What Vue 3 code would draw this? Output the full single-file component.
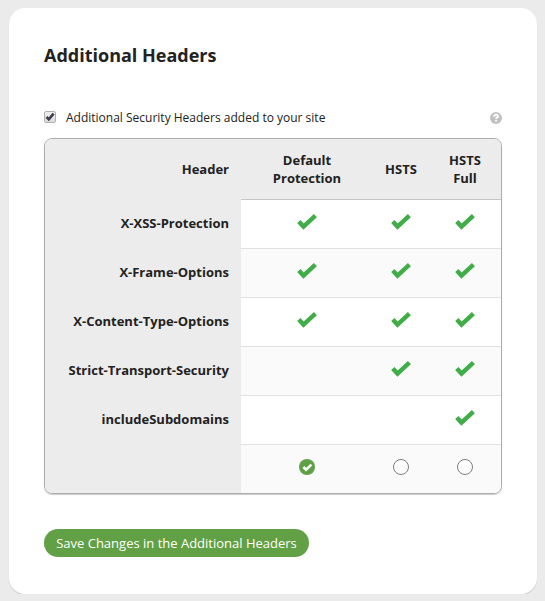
<script setup>
import { ref } from 'vue'

const enabled = ref(true)
const selected = ref(0)
const plans = ['Default Protection', 'HSTS', 'HSTS Full']
const rows = [
  { name: 'X-XSS-Protection', on: [true, true, true] },
  { name: 'X-Frame-Options', on: [true, true, true] },
  { name: 'X-Content-Type-Options', on: [true, true, true] },
  { name: 'Strict-Transport-Security', on: [false, true, true] },
  { name: 'includeSubdomains', on: [false, false, true] },
]
</script>

<template>
  <main class="card">
    <h1>Additional Headers</h1>
    <div class="option">
      <label>
        <button class="checkbox" type="button" role="checkbox" :aria-checked="enabled" @click="enabled = !enabled">
          <svg v-if="enabled" viewBox="0 0 10 10"><path d="M1.5 5 3.8 7.3 8.6 1.6" /></svg>
        </button>
        <span>Additional Security Headers added to your site</span>
      </label>
      <svg class="help" viewBox="0 0 12 12">
        <circle cx="6" cy="6" r="6" />
        <path d="M4.1 4.7C4.2 3.3 5 2.8 6.1 2.8 7.2 2.8 8 3.5 8 4.4 8 5.5 6.1 5.6 6.1 7.1M6.1 8V9.5" />
      </svg>
    </div>

    <div class="table">
      <div class="row head">
        <div class="name">Header</div>
        <div v-for="p in plans" :key="p" class="cell">{{ p }}</div>
      </div>
      <div v-for="r in rows" :key="r.name" class="row">
        <div class="name">{{ r.name }}</div>
        <div v-for="(v, i) in r.on" :key="i" class="cell">
          <svg v-if="v" class="tick" viewBox="0 0 20 16">
            <path d="M1.8 7.4 6.5 12.6 18.4 1.6" />
          </svg>
        </div>
      </div>
      <div class="row choices">
        <div class="name"></div>
        <div v-for="(p, i) in plans" :key="p" class="cell">
          <button class="radio" :class="{ on: selected === i }" type="button" @click="selected = i">
            <svg v-if="selected === i" viewBox="0 0 16 16"><path d="M4.4 8 7 10.6 12.4 5.6" /></svg>
          </button>
        </div>
      </div>
    </div>

    <button class="save" type="button">Save Changes in the Additional Headers</button>
  </main>
</template>

<style>
body {
  background: #ebebeb;
}
</style>

<style scoped>
.card {
  box-sizing: border-box;
  width: 528px;
  height: 586px;
  margin: 8px 0 0 9px;
  padding: 35px 35px 0;
  border-radius: 16px;
  background: #fff;
  box-shadow: 0 1px 1px #c8c8c8;
  color: #222;
  font-family: "Open Sans", "Noto Sans", sans-serif;
  font-size: 13px;
  display: flow-root;
}
h1 {
  margin: 0;
  font-size: 18px;
  line-height: 25px;
  font-weight: 700;
}
.option {
  margin-top: 40px;
  height: 18px;
  display: flex;
  align-items: center;
  justify-content: space-between;
  font-size: 12px;
  line-height: 18px;
}
label {
  display: flex;
  align-items: center;
  gap: 10px;
}
label span {
  padding-top: 2px;
}
button {
  padding: 0;
  border: 0;
  font: inherit;
}
.checkbox {
  box-sizing: border-box;
  width: 12px;
  height: 12px;
  border: 1px solid #b0b0b0;
  border-radius: 2px;
  background: linear-gradient(#eee, #ddd);
}
.checkbox svg {
  display: block;
  width: 10px;
  height: 10px;
}
.checkbox path {
  fill: none;
  stroke: #443c50;
  stroke-width: 2.6;
}
.help {
  width: 12px;
  height: 12px;
  padding-top: 1px;
}
.help circle {
  fill: #c1c1c1;
}
.help path {
  fill: none;
  stroke: #fff;
  stroke-width: 1.9;
}
.table {
  box-sizing: border-box;
  width: 458px;
  margin-top: 12px;
  border: 1px solid #adadad;
  border-radius: 8px;
  overflow: hidden;
  box-shadow: 0 1px 1px #ccc;
  font-weight: 700;
  line-height: 18px;
}
.row {
  display: grid;
  grid-template-columns: 196px 132px 56px 72px;
  height: 49px;
}
.name,
.cell {
  box-sizing: border-box;
  display: flex;
  align-items: center;
}
.name {
  justify-content: flex-end;
  padding: 0 12px 4px 0;
  background: #ececec;
}
.cell {
  justify-content: center;
  border-bottom: 1px solid #e1e1e1;
  padding: 0 12px;
  text-align: center;
  background: #fff;
}
.row:nth-child(odd) .cell {
  background: #fafafa;
}
.row.head {
  height: 61px;
}
.row.head .name {
  padding-bottom: 1px;
}
.row.head .cell {
  background: #ececec;
  border-bottom-color: #c6c6c6;
}
.row.choices {
  height: 48px;
}
.choices .cell {
  border-bottom: 0;
  padding-bottom: 4px;
}
.tick {
  flex: none;
  width: 20px;
  height: 16px;
  margin-bottom: 4px;
  overflow: visible;
}
.tick path {
  fill: none;
  stroke: #41ad49;
  stroke-width: 4.4;
}
.radio {
  box-sizing: border-box;
  flex: none;
  width: 16px;
  height: 16px;
  border: 1px solid #7c7c7c;
  border-radius: 50%;
  background: #fff;
}
.radio.on {
  border: 0;
  background: #60a044;
}
.radio svg {
  display: block;
}
.radio path {
  fill: none;
  stroke: #fff;
  stroke-width: 2.6;
}
.save {
  display: block;
  width: 265px;
  height: 28px;
  margin-top: 35px;
  border-radius: 14px;
  background: #61a044;
  color: #fff;
  line-height: 28px;
  white-space: nowrap;
}
</style>
